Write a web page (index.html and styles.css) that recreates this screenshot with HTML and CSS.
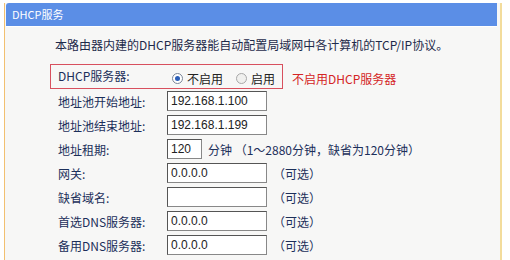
FILE: index.html
```html
<!DOCTYPE html>
<html lang="zh-CN">

<head>
    <meta charset="UTF-8">
    <meta name="viewport" content="width=device-width, initial-scale=1.0">
    <title>DHCP服务</title>
    <link rel="stylesheet" href="styles.css">
</head>

<body>
    <div class="frame">
        <div class="title">DHCP服务</div>
        <div class="content">
            <p class="intro">本路由器内建的DHCP服务器能自动配置局域网中各计算机的TCP/IP协议。</p>
            <div class="form">
                <div class="row">
                    <div class="switch">
                        <span class="label">DHCP服务器:</span>
                        <span class="radio checked"></span><span class="opt">不启用</span>
                        <span class="radio"></span><span class="opt">启用</span>
                    </div>
                    <span class="warn">不启用DHCP服务器</span>
                </div>
                <div class="row">
                    <span class="label">地址池开始地址:</span>
                    <span class="field">192.168.1.100</span>
                </div>
                <div class="row">
                    <span class="label">地址池结束地址:</span>
                    <span class="field">192.168.1.199</span>
                </div>
                <div class="row">
                    <span class="label">地址租期:</span>
                    <span class="field short">120</span>
                    <span class="hint">分钟 （1～2880分钟，缺省为120分钟）</span>
                </div>
                <div class="row">
                    <span class="label">网关:</span>
                    <span class="field">0.0.0.0</span>
                    <span class="hint">（可选）</span>
                </div>
                <div class="row">
                    <span class="label">缺省域名:</span>
                    <span class="field"></span>
                    <span class="hint">（可选）</span>
                </div>
                <div class="row">
                    <span class="label">首选DNS服务器:</span>
                    <span class="field">0.0.0.0</span>
                    <span class="hint">（可选）</span>
                </div>
                <div class="row">
                    <span class="label">备用DNS服务器:</span>
                    <span class="field">0.0.0.0</span>
                    <span class="hint">（可选）</span>
                </div>
            </div>
        </div>
    </div>
</body>

</html>
```

FILE: styles.css
```css
* {
    box-sizing: border-box;
}

body {
    margin: 0;
    padding: 0;
    background: #fff;
    font-family: "Noto Sans CJK SC", sans-serif;
    font-size: 12px;
    color: #1c2f5a;
}

.frame {
    margin: 3px 0 0 4px;
    width: 498px;
    height: 257px;
    border-left: 1px solid #f2c070;
    border-right: 2px solid #f3dc9c;
    background: #f7f7f6;
}

.title {
    height: 23px;
    line-height: 23px;
    margin: 0 3px 1px 1px;
    padding-left: 6px;
    background: #5b8ee6;
    border-radius: 3px 0 0 0;
    color: #fff;
    font-size: 11px;
    box-shadow: 0 1px 0 #fff;
}

.content {
    padding: 10px 0 0 45px;
}

.intro {
    margin: 0 0 11px 5px;
    line-height: 16px;
    color: #1e2a4a;
    white-space: nowrap;
}

.row {
    display: flex;
    align-items: center;
    height: 24px;
    padding-left: 8px;
    white-space: nowrap;
}

.row:first-child {
    height: 25px;
    padding-left: 0;
}

.switch {
    display: flex;
    align-items: center;
    flex-shrink: 0;
    width: 233px;
    height: 25px;
    padding-left: 7px;
    border: 1px solid #d8505e;
}

.label {
    width: 109px;
    flex-shrink: 0;
}

.switch .label {
    width: 114px;
    padding-bottom: 3px;
}

.radio {
    flex-shrink: 0;
    width: 11px;
    height: 11px;
    border-radius: 50%;
    border: 1px solid #a8a8a8;
    background: #f0f0ee;
    margin: 3px 4px 0 0;
    display: inline-flex;
    align-items: center;
    justify-content: center;
}

.radio.checked {
    border-color: #7a8698;
    background: #fff;
}

.radio.checked::after {
    content: "";
    width: 5px;
    height: 5px;
    border-radius: 50%;
    background: #2c5fb8;
}

.opt {
    flex-shrink: 0;
    color: #222;
    margin-right: 13px;
    padding-top: 3px;
}

.warn {
    color: #d42525;
    margin-left: 9px;
    padding-top: 4px;
}

.field {
    flex-shrink: 0;
    width: 100px;
    height: 20px;
    line-height: 18px;
    padding-left: 3px;
    background: #fff;
    border: 1px solid #888;
    border-top-color: #555;
    border-left-color: #555;
    font-family: "Liberation Sans", sans-serif;
    color: #222;
}

.field.short {
    width: 35px;
}

.hint {
    margin-left: 6px;
}
```
